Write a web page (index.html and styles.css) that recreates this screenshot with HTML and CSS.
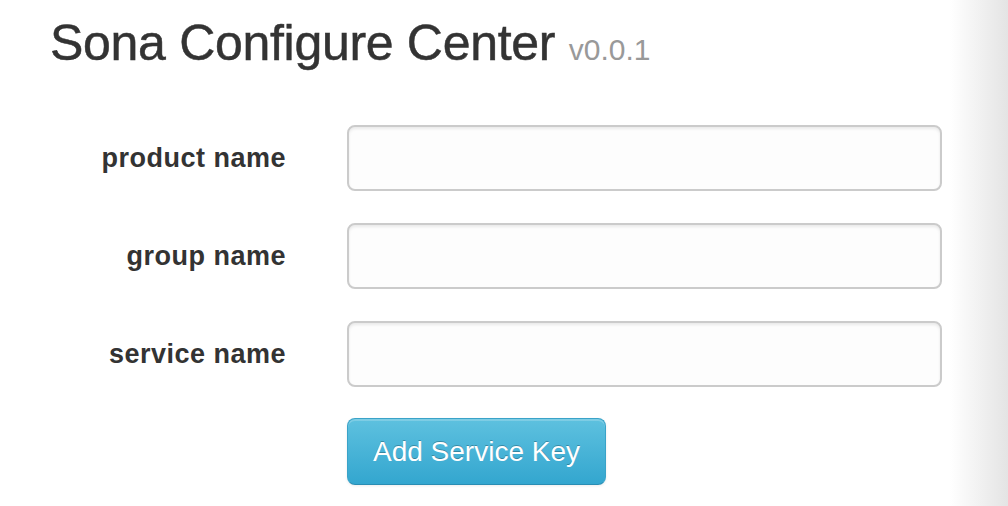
FILE: index.html
```html
<!DOCTYPE html>
<html>
<head>
<meta charset="utf-8">
<title>Sona Configure Center</title>
<link rel="stylesheet" href="styles.css">
</head>
<body>
<div class="container">
  <h1 class="title">Sona Configure Center <small class="version">v0.0.1</small></h1>
  <form class="form">
    <div class="row">
      <label class="label" for="product">product name</label>
      <input class="input" id="product" type="text">
    </div>
    <div class="row">
      <label class="label" for="group">group name</label>
      <input class="input" id="group" type="text">
    </div>
    <div class="row">
      <label class="label" for="service">service name</label>
      <input class="input" id="service" type="text">
    </div>
    <div class="row">
      <span class="label"></span>
      <div class="actions"><button class="btn" type="button">Add Service Key</button></div>
    </div>
  </form>
</div>
</body>
</html>
```

FILE: styles.css
```css
html, body {
  margin: 0;
  padding: 0;
  height: 100%;
}
body {
  font-family: "Liberation Sans", Arial, Helvetica, sans-serif;
  color: #333;
  background: linear-gradient(to right, #ffffff 0, #ffffff 950px, #e4e4e4 1008px);
  overflow: hidden;
}
.container {
  padding-left: 50px;
}
.title {
  margin: 13px 0 0 0;
  font-size: 50px;
  line-height: 60px;
  font-weight: normal;
  color: #333;
  letter-spacing: -0.3px;
  -webkit-text-stroke: 0.5px #333;
}
.version {
  font-size: 30px;
  color: #999;
  letter-spacing: 0;
  -webkit-text-stroke: 0;
}
.form {
  margin-top: 45px;
  display: flex;
  flex-direction: column;
  gap: 32px;
}
.row {
  display: grid;
  grid-template-columns: 236px 595px;
  column-gap: 61px;
  align-items: center;
}
.row:last-child {
  margin-top: -1px;
}
.label {
  text-align: right;
  font-size: 27px;
  font-weight: bold;
  letter-spacing: 0.5px;
  line-height: 66px;
  color: #333;
}
.input {
  box-sizing: border-box;
  width: 595px;
  height: 66px;
  margin: 0;
  border: 2px solid #cbcbcb;
  border-radius: 8px;
  background: #fdfdfd;
  box-shadow: inset 0 2px 3px rgba(0, 0, 0, 0.08);
  font-size: 28px;
  padding: 0 16px;
  outline: none;
}
.actions {
  display: flex;
}
.btn {
  box-sizing: border-box;
  height: 67px;
  width: 259px;
  padding: 0;
  font-family: "Liberation Sans", Arial, Helvetica, sans-serif;
  font-size: 28px;
  line-height: 65px;
  color: #fff;
  text-shadow: 0 -1px 0 rgba(0, 0, 0, 0.25);
  background: linear-gradient(#5ec1df, #33a6cf);
  border: 1px solid #3aa3c8;
  border-bottom-color: #2a8db3;
  border-radius: 8px;
  box-shadow: inset 0 2px 0 rgba(255, 255, 255, 0.2), 0 1px 3px rgba(0, 0, 0, 0.08);
  cursor: pointer;
}
```
